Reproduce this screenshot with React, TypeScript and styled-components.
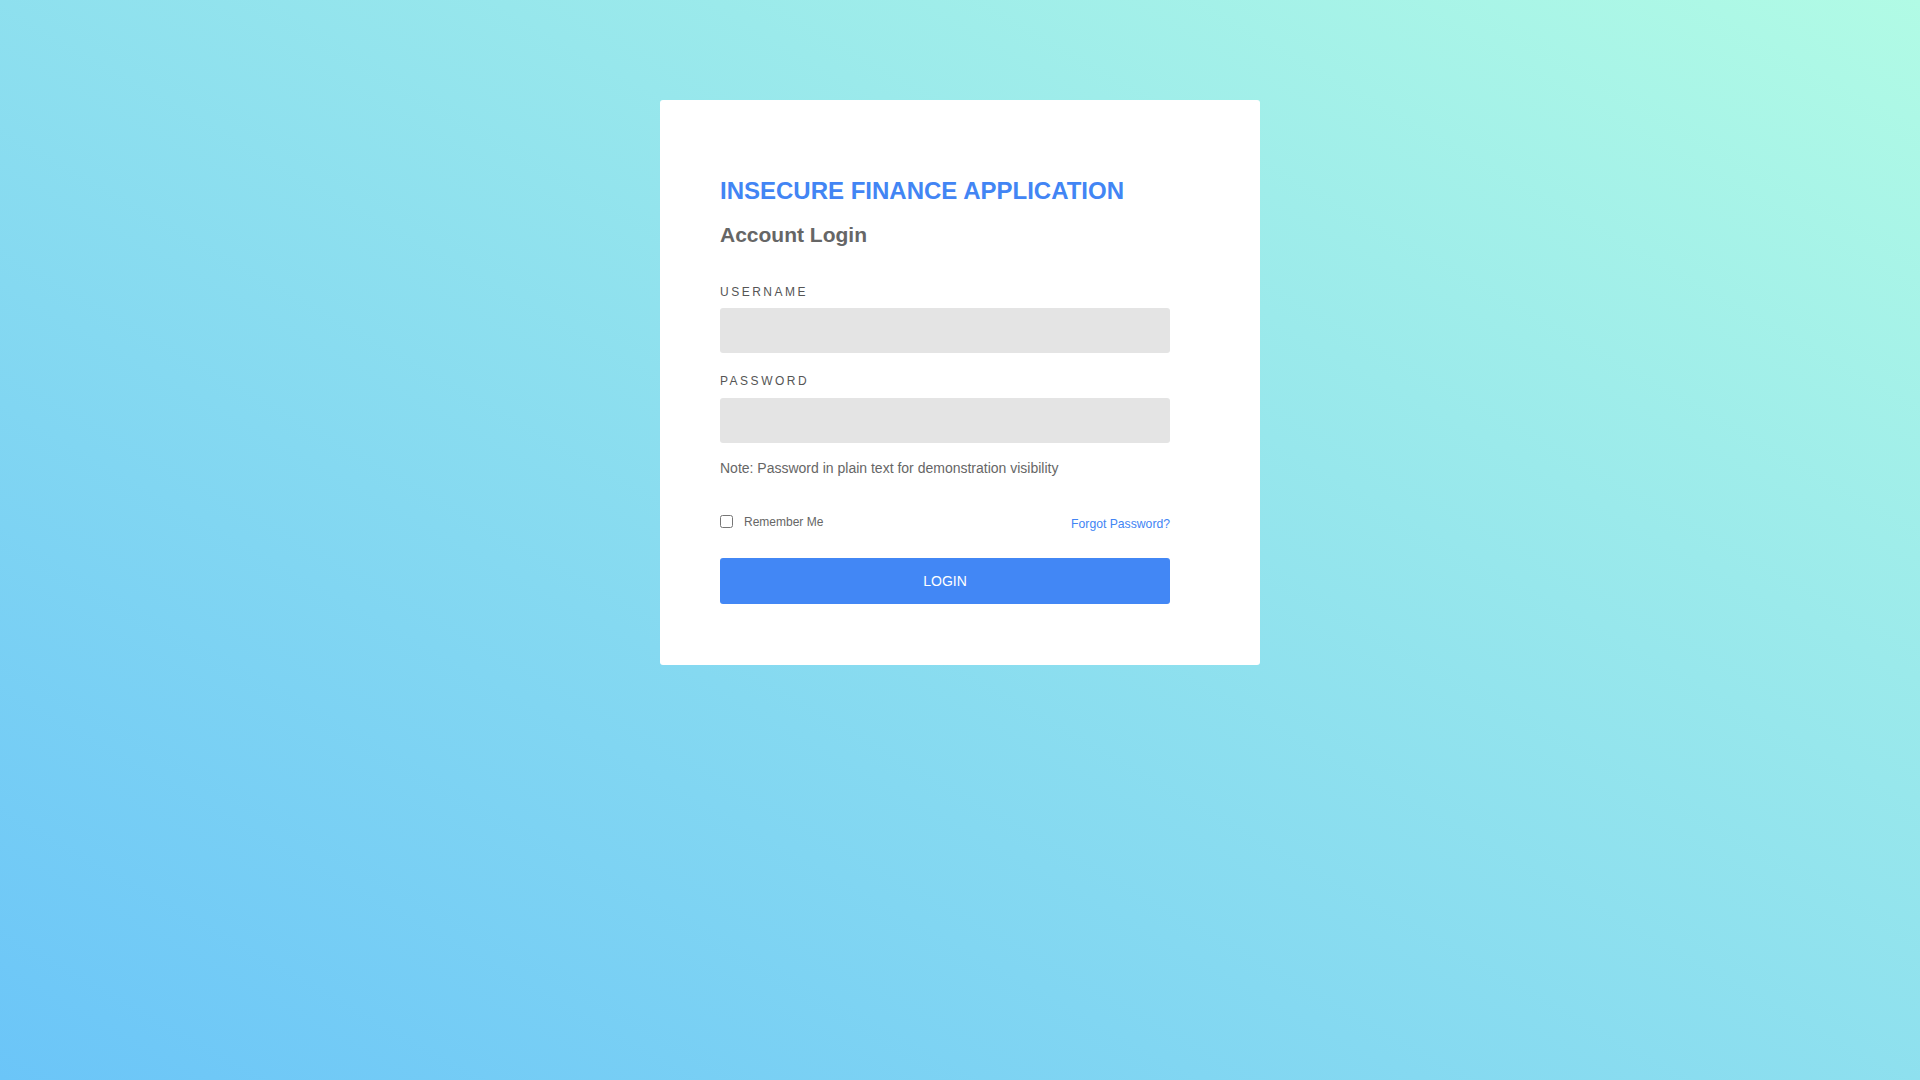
import React, { useState } from "react";
import styled, { createGlobalStyle } from "styled-components";

const GlobalStyle = createGlobalStyle`
  * {
    box-sizing: border-box;
  }
  html,
  body {
    margin: 0;
    padding: 0;
  }
  body {
    font-family: "Liberation Sans", Arial, sans-serif;
    min-height: 100vh;
    background: linear-gradient(to top right, #6bc5f8, #b1fbe5);
  }
`;

const Page = styled.div`
  min-height: 100vh;
  display: flex;
  justify-content: center;
  align-items: flex-start;
  padding-top: 100px;
`;

const Card = styled.div`
  width: 600px;
  background: #ffffff;
  border-radius: 3px;
  padding: 61px 60px 61px;
`;

const Form = styled.form`
  width: 450px;
  display: flex;
  flex-direction: column;
`;

const Title = styled.h1`
  margin: 16px 0 0;
  font-size: 24px;
  line-height: 28px;
  font-weight: 700;
  color: #4285f4;
`;

const Subtitle = styled.h2`
  margin: 18px 0 0;
  font-size: 21px;
  line-height: 24px;
  font-weight: 700;
  color: #666666;
`;

const Label = styled.label<{ $first?: boolean }>`
  margin-top: ${(p) => (p.$first ? "38px" : "21px")};
  font-size: 12px;
  line-height: 14px;
  letter-spacing: 2.5px;
  text-transform: uppercase;
  color: #555555;
`;

const Input = styled.input<{ $gap: number }>`
  margin-top: ${(p) => p.$gap}px;
  width: 100%;
  height: 45px;
  border: none;
  border-radius: 3px;
  background: #e4e4e4;
  padding: 0 14px;
  font-family: inherit;
  font-size: 14px;
  color: #333333;
  outline: none;
`;

const Note = styled.p`
  margin: 17px 0 0;
  font-size: 14px;
  line-height: 16px;
  color: #666666;
`;

const OptionsRow = styled.div`
  margin-top: 38px;
  height: 16px;
  display: flex;
  align-items: center;
  justify-content: space-between;
`;

const Remember = styled.label`
  display: flex;
  align-items: center;
  font-size: 12px;
  color: #666666;
  cursor: pointer;

  input {
    margin: 0 11px 0 0;
    width: 13px;
    height: 13px;
    position: relative;
    top: -1px;
  }
`;

const ForgotLink = styled.a`
  font-size: 12.2px;
  color: #4285f4;
  text-decoration: none;
  position: relative;
  top: 2px;
`;

const LoginButton = styled.button`
  margin-top: 28px;
  width: 100%;
  height: 46px;
  border: none;
  border-radius: 3px;
  background: #4287f5;
  color: #ffffff;
  font-family: inherit;
  font-size: 14px;
  text-transform: uppercase;
  cursor: pointer;
`;

export default function App() {
  const [username, setUsername] = useState("");
  const [password, setPassword] = useState("");
  const [remember, setRemember] = useState(false);

  return (
    <>
      <GlobalStyle />
      <Page>
        <Card>
          <Form onSubmit={(e) => e.preventDefault()}>
            <Title>INSECURE FINANCE APPLICATION</Title>
            <Subtitle>Account Login</Subtitle>

            <Label $first htmlFor="username">
              Username
            </Label>
            <Input
              id="username"
              type="text"
              $gap={9}
              value={username}
              onChange={(e) => setUsername(e.target.value)}
            />

            <Label htmlFor="password">Password</Label>
            <Input
              id="password"
              type="text"
              $gap={10}
              value={password}
              onChange={(e) => setPassword(e.target.value)}
            />

            <Note>Note: Password in plain text for demonstration visibility</Note>

            <OptionsRow>
              <Remember>
                <input
                  type="checkbox"
                  checked={remember}
                  onChange={(e) => setRemember(e.target.checked)}
                />
                Remember Me
              </Remember>
              <ForgotLink href="#">Forgot Password?</ForgotLink>
            </OptionsRow>

            <LoginButton type="submit">Login</LoginButton>
          </Form>
        </Card>
      </Page>
    </>
  );
}
